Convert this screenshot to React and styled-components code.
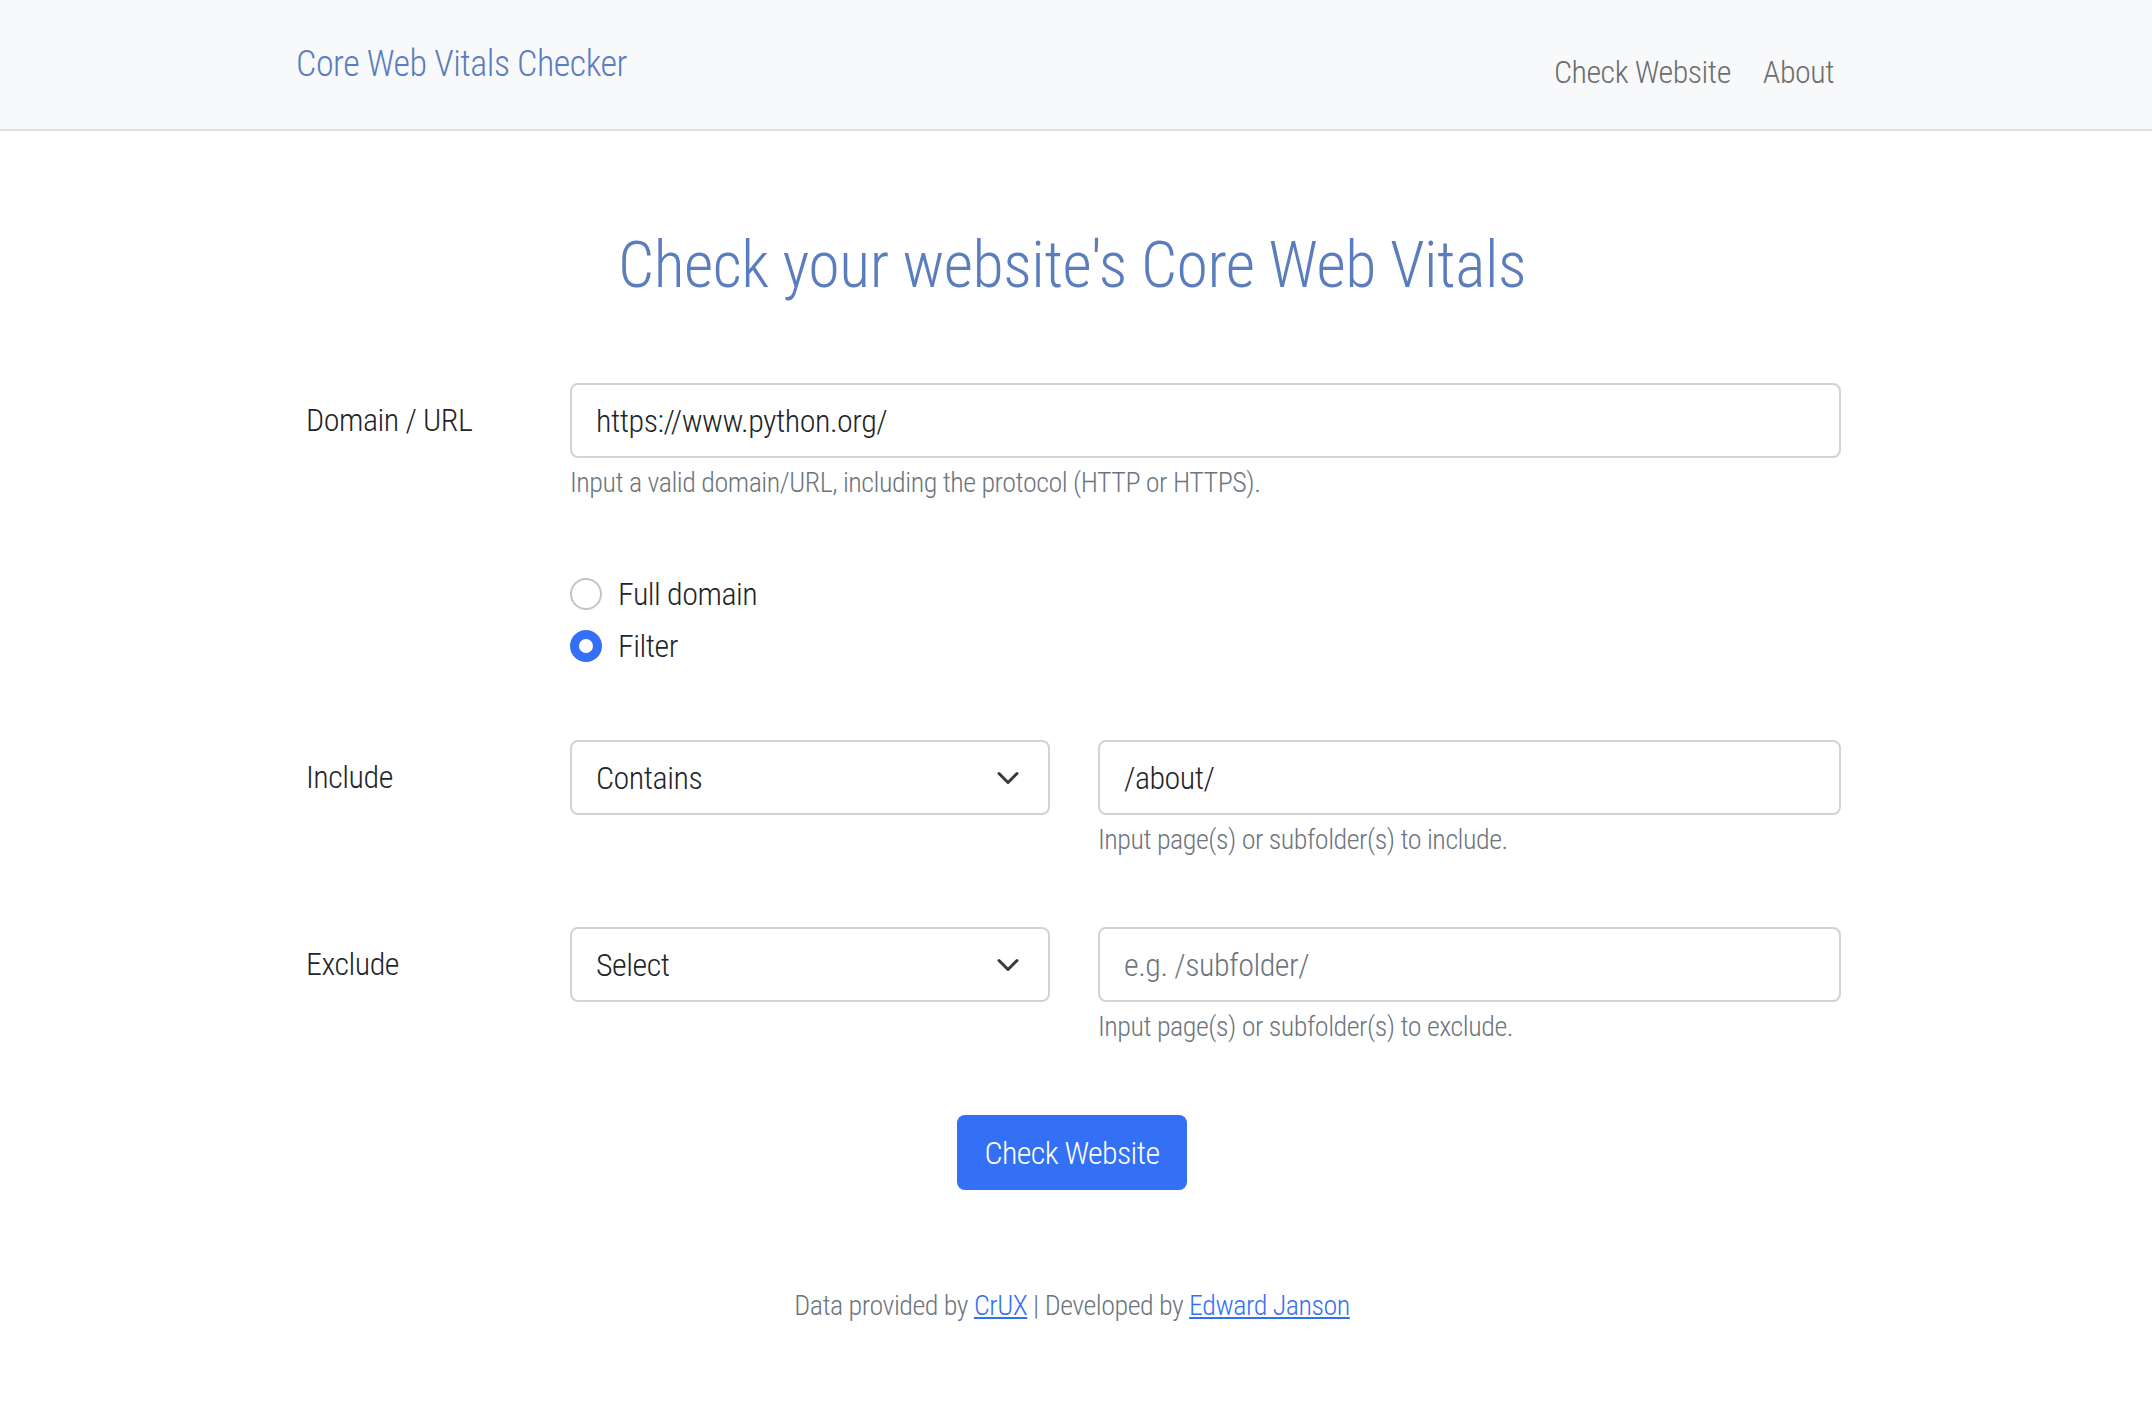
import React from "react";
import styled, { createGlobalStyle } from "styled-components";

const GlobalStyle = createGlobalStyle`
  body {
    margin: 0;
    background: #fff;
    color: #212529;
    font-family: "Roboto Condensed", "Liberation Sans Narrow", "DejaVu Sans Condensed", "Liberation Sans", sans-serif;
    font-weight: 300;
    letter-spacing: -0.03em;
  }
`;

export default function App() {
  return (
    <>
      <GlobalStyle />
      <Navbar>
        <NavInner>
          <Brand href="#">Core Web Vitals Checker</Brand>
          <NavLinks>
            <NavLink href="#">Check Website</NavLink>
            <NavLink href="#">About</NavLink>
          </NavLinks>
        </NavInner>
      </Navbar>

      <Main>
        <Title>Check your website's Core Web Vitals</Title>

        {/* domain */}
        <Row>
          <Label>Domain / URL</Label>
          <div>
            <TextInput defaultValue="https://www.python.org/" />
            <Help>Input a valid domain/URL, including the protocol (HTTP or HTTPS).</Help>
          </div>
        </Row>

        {/* scope */}
        <Row>
          <span />
          <RadioGroup>
            <RadioItem>
              <RadioDot />
              Full domain
            </RadioItem>
            <RadioItem>
              <RadioDot checked />
              Filter
            </RadioItem>
          </RadioGroup>
        </Row>

        {/* include */}
        <Row>
          <Label>Include</Label>
          <FilterPair>
            <SelectBox value="Contains" />
            <div>
              <TextInput defaultValue="/about/" />
              <Help>Input page(s) or subfolder(s) to include.</Help>
            </div>
          </FilterPair>
        </Row>

        {/* exclude */}
        <Row>
          <Label>Exclude</Label>
          <FilterPair>
            <SelectBox value="Select" />
            <div>
              <TextInput placeholder="e.g. /subfolder/" />
              <Help>Input page(s) or subfolder(s) to exclude.</Help>
            </div>
          </FilterPair>
        </Row>

        <ButtonWrap>
          <Button>Check Website</Button>
        </ButtonWrap>

        <Footer>
          Data provided by <a href="#">CrUX</a> | Developed by{" "}
          <a href="#">Edward Janson</a>
        </Footer>
      </Main>
    </>
  );
}

function SelectBox({ value }) {
  return (
    <Select>
      <span>{value}</span>
      <svg width="32" height="24" viewBox="0 0 16 16" fill="none">
        <path
          d="m2 5 6 6 6-6"
          stroke="#343a40"
          strokeWidth="2"
          strokeLinecap="round"
          strokeLinejoin="round"
        />
      </svg>
    </Select>
  );
}

const Navbar = styled.nav`
  height: 129px;
  background: #f8f9fa;
  border-bottom: 2px solid #dee2e6;
`;

const NavInner = styled.div`
  width: 1552px;
  padding-right: 8px;
  margin: 0 auto;
  display: flex;
  justify-content: space-between;
  align-items: flex-start;
`;

const Brand = styled.a`
  padding-top: 40px;
  font-size: 36px;
  line-height: 48px;
  color: #5a7dbe;
  text-decoration: none;
`;

const NavLinks = styled.div`
  display: flex;
  padding-top: 48px;
`;

const NavLink = styled.a`
  padding: 0 16px;
  font-size: 32px;
  line-height: 48px;
  color: #6d6e6f;
  text-decoration: none;
  &:last-child {
    padding-right: 14px;
  }
`;

const Main = styled.main`
  width: 1538px;
  padding-right: 8px;
  margin: 0 auto;
`;

const Title = styled.h1`
  margin: 100px 0 82px;
  font-size: 64px;
  font-weight: 300;
  line-height: 70px;
  text-align: center;
  color: #5a7dbe;
`;

const Row = styled.div`
  display: grid;
  grid-template-columns: 267px 1fr;
  align-items: start;
  margin-bottom: 66px;
`;

const Label = styled.label`
  padding-left: 3px;
  font-size: 32px;
  line-height: 75px;
  color: #212529;
`;

const TextInput = styled.input`
  display: block;
  box-sizing: border-box;
  width: 100%;
  height: 75px;
  padding: 0 24px;
  border: 2px solid #ced4da;
  border-radius: 8px;
  font-family: inherit;
  font-weight: inherit;
  font-size: 32px;
  letter-spacing: inherit;
  color: #212529;
  background: #fff;
  outline: none;
  &::placeholder {
    color: #6c757d;
  }
`;

const Help = styled.div`
  margin-top: 4px;
  font-size: 28px;
  line-height: 42px;
  color: #6c757d;
`;

const RadioGroup = styled.div`
  display: flex;
  flex-direction: column;
  gap: 4px;
  margin-bottom: 4px;
`;

const RadioItem = styled.label`
  display: flex;
  align-items: center;
  gap: 16px;
  font-size: 32px;
  line-height: 48px;
  color: #212529;
`;

const RadioDot = styled.span`
  box-sizing: border-box;
  width: 32px;
  height: 32px;
  border-radius: 50%;
  border: ${({ checked }) => (checked ? "9px solid #3370f5" : "2px solid #c4c4c4")};
  background: #fff;
`;

const FilterPair = styled.div`
  display: grid;
  grid-template-columns: 480px 1fr;
  column-gap: 48px;
  align-items: start;
`;

const Select = styled.div`
  box-sizing: border-box;
  height: 75px;
  padding: 0 24px 0 24px;
  border: 2px solid #ced4da;
  border-radius: 8px;
  display: flex;
  align-items: center;
  justify-content: space-between;
  font-size: 32px;
  color: #212529;
`;

const ButtonWrap = styled.div`
  display: flex;
  justify-content: center;
  margin-top: 67px;
`;

const Button = styled.button`
  height: 75px;
  padding: 0 28px;
  border: none;
  border-radius: 8px;
  background: #3370f5;
  color: #fff;
  font-family: inherit;
  font-weight: inherit;
  font-size: 32px;
  letter-spacing: -0.02em;
`;

const Footer = styled.footer`
  margin-top: 95px;
  text-align: center;
  font-size: 28px;
  line-height: 42px;
  color: #6c757d;
  a {
    color: #3370f5;
    text-decoration: underline;
  }
`;
